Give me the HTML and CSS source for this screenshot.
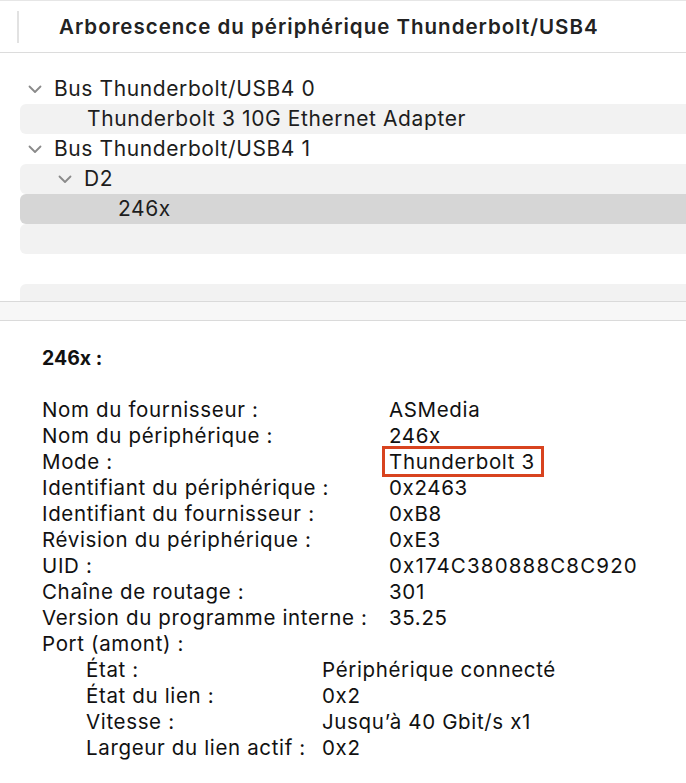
FILE: index.html
```html
<!DOCTYPE html>
<html lang="fr">
<head>
  <meta charset="UTF-8">
  <title>Arborescence Thunderbolt/USB4</title>
  <link rel="stylesheet" href="styles.css">
</head>
<body>
  <div class="entete">
    <div class="separateur"></div>
    <h1>Arborescence du périphérique Thunderbolt/USB4</h1>
  </div>

  <div class="arbre">
    <div class="ligne"><span class="chevron"><svg width="14" height="9" viewBox="0 0 14 9"><path d="M1.5 1.5 L7 7 L12.5 1.5" fill="none" stroke="#8a8a8a" stroke-width="1.8" stroke-linecap="round" stroke-linejoin="round"/></svg></span>Bus Thunderbolt/USB4 0</div>
    <div class="ligne raye niveau2">Thunderbolt 3 10G Ethernet Adapter</div>
    <div class="ligne"><span class="chevron"><svg width="14" height="9" viewBox="0 0 14 9"><path d="M1.5 1.5 L7 7 L12.5 1.5" fill="none" stroke="#8a8a8a" stroke-width="1.8" stroke-linecap="round" stroke-linejoin="round"/></svg></span>Bus Thunderbolt/USB4 1</div>
    <div class="ligne raye niveau1"><span class="chevron"><svg width="14" height="9" viewBox="0 0 14 9"><path d="M1.5 1.5 L7 7 L12.5 1.5" fill="none" stroke="#8a8a8a" stroke-width="1.8" stroke-linecap="round" stroke-linejoin="round"/></svg></span>D2</div>
    <div class="ligne choisi niveau3">246x</div>
    <div class="ligne raye"></div>
    <div class="ligne"></div>
    <div class="ligne raye coupe"></div>
  </div>

  <div class="diviseur"></div>

  <div class="details">
    <h2>246x :</h2>
    <div class="table">
      <span>Nom du fournisseur :</span><span>ASMedia</span>
      <span>Nom du périphérique :</span><span>246x</span>
      <span>Mode :</span><span><span class="encadre">Thunderbolt 3</span></span>
      <span>Identifiant du périphérique :</span><span>0x2463</span>
      <span>Identifiant du fournisseur :</span><span>0xB8</span>
      <span>Révision du périphérique :</span><span>0xE3</span>
      <span>UID :</span><span class="chiffres">0x174C380888C8C920</span>
      <span>Chaîne de routage :</span><span>301</span>
      <span>Version du programme interne :</span><span>35.25</span>
      <span class="pleine">Port (amont) :</span>
    </div>
    <div class="table sous">
      <span>État :</span><span>Périphérique connecté</span>
      <span>État du lien :</span><span>0x2</span>
      <span>Vitesse :</span><span>Jusqu’à 40 Gbit/s x1</span>
      <span>Largeur du lien actif :</span><span>0x2</span>
    </div>
  </div>
</body>
</html>
```

FILE: styles.css
```css
body {
  margin: 0;
  font-family: Inter, "Noto Sans", sans-serif;
  color: #1d1d1d;
  background: #fff;
  overflow: hidden;
}

.entete {
  height: 53px;
  border-top: 1px solid #e6e6e6;
  border-bottom: 1px solid #dcdcdc;
  display: flex;
  align-items: center;
  box-sizing: border-box;
}
.separateur {
  width: 2px;
  height: 32px;
  background: #e2e2e2;
  margin-left: 17px;
}
.entete h1 {
  margin: 0 0 0 40px;
  font-size: 20.5px;
  font-weight: 600;
  letter-spacing: 1px;
  color: #222;
}

.arbre {
  padding-top: 21px;
  height: 227px;
  overflow: hidden;
}
.ligne {
  height: 30px;
  line-height: 30px;
  margin-left: 20px;
  padding-left: 8px;
  font-size: 21px;
  letter-spacing: 0.6px;
  display: flex;
  align-items: center;
  border-radius: 6px 0 0 6px;
}
.raye {
  background: #f2f2f2;
}
.choisi {
  background: #d6d6d6;
}
.chevron {
  width: 26px;
  display: flex;
  align-items: center;
}
.niveau1 { padding-left: 38px; }
.niveau2 { padding-left: 67px; }
.niveau3 { padding-left: 98px; }

.diviseur {
  height: 18px;
  background: #f7f7f7;
  border-top: 1px solid #dadada;
  border-bottom: 1px solid #dadada;
}

.details {
  padding: 24px 0 0 42px;
  font-size: 20.5px;
  letter-spacing: 0.65px;
  color: #111;
}
.details h2 {
  margin: 0 0 26px 0;
  font-size: 19.5px;
  font-weight: 700;
  letter-spacing: 0;
  line-height: 26px;
}
.table {
  display: grid;
  grid-template-columns: 347px auto;
  line-height: 26px;
}
.pleine {
  grid-column: 1 / 3;
}
.sous {
  margin-left: 44px;
  grid-template-columns: 236px auto;
}
.chiffres {
  letter-spacing: 1.15px;
}
.encadre {
  border: 3px solid #d8431f;
  padding: 0 6px 0 4px;
  margin-left: -7px;
}
```
